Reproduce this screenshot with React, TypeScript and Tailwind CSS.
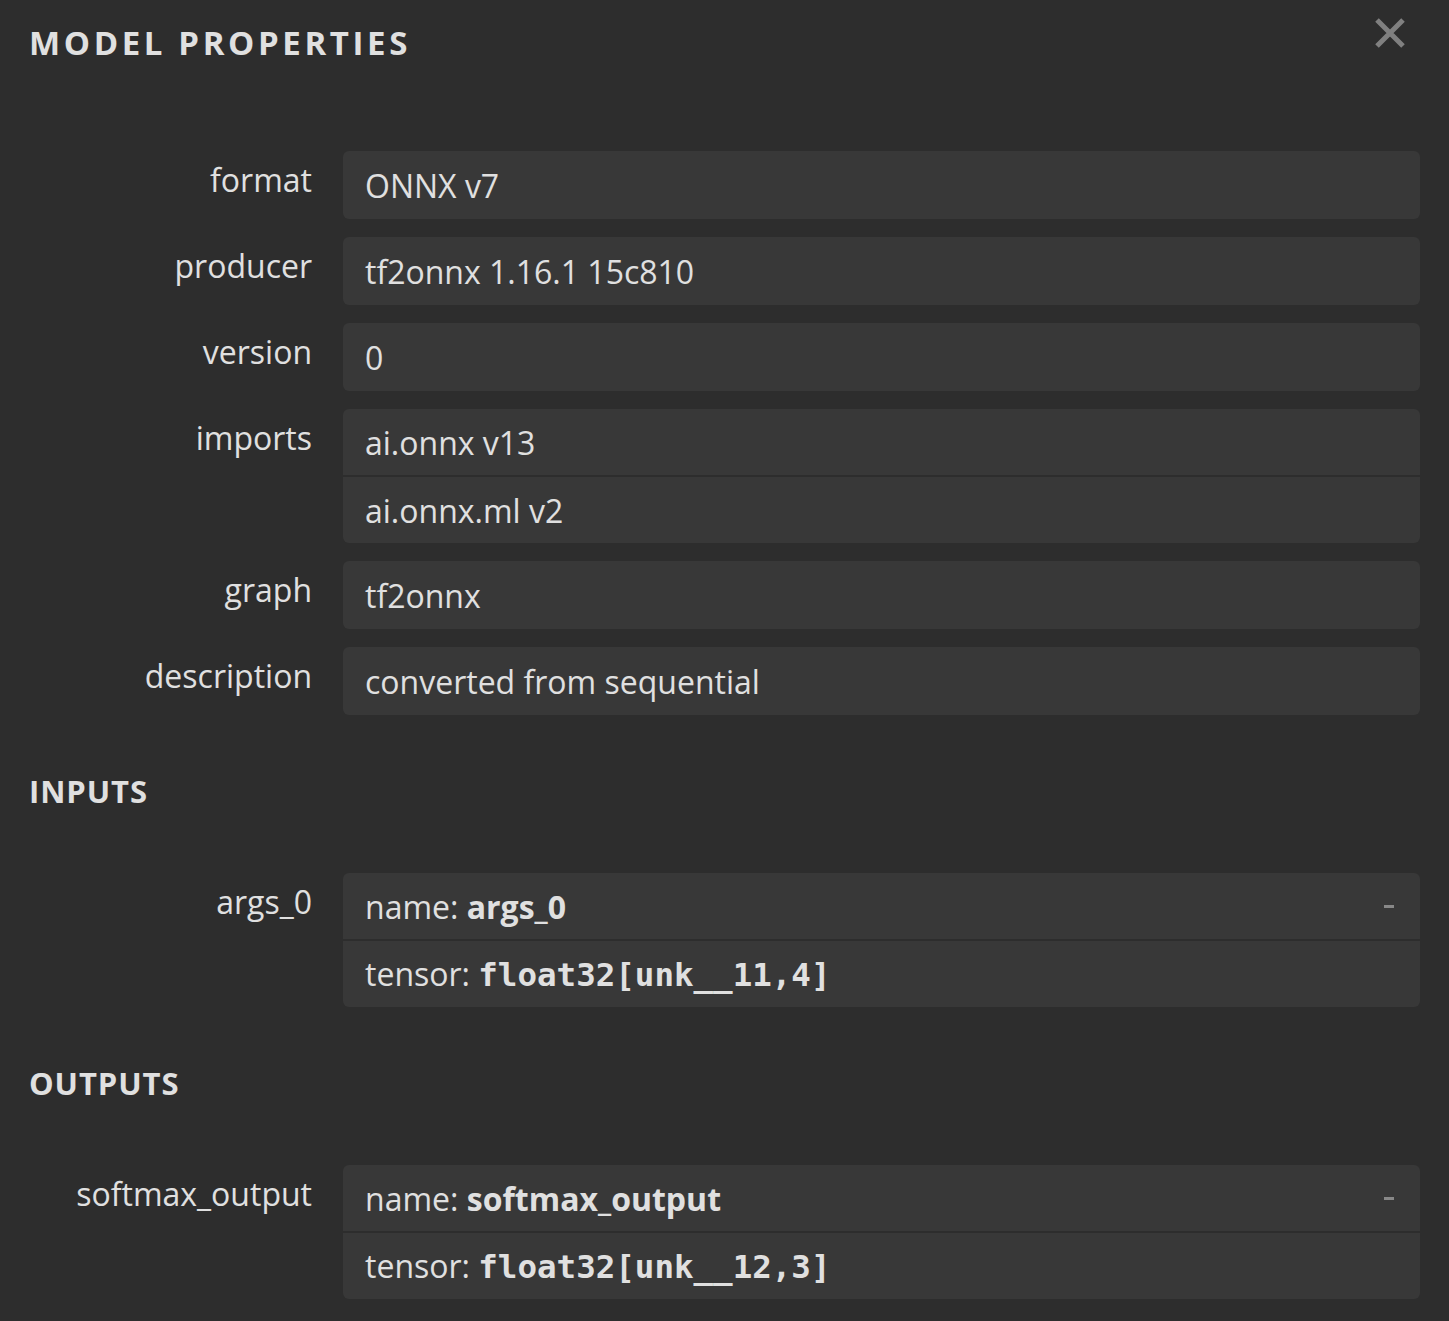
import React from 'react';

type Row = { label: string; values: React.ReactNode[]; expander?: boolean };

const sans = { fontFamily: '"Open Sans", "Noto Sans", sans-serif' };

const metadata: Row[] = [
  { label: 'format', values: ['ONNX v7'] },
  { label: 'producer', values: ['tf2onnx 1.16.1 15c810'] },
  { label: 'version', values: ['0'] },
  { label: 'imports', values: ['ai.onnx v13', 'ai.onnx.ml v2'] },
  { label: 'graph', values: ['tf2onnx'] },
  { label: 'description', values: ['converted from sequential'] },
];

const Arg = ({ name, type }: { name: string; type: string }) => [
  <span key="n">
    name: <b className="font-bold">{name}</b>
  </span>,
  <span key="t">
    tensor:{' '}
    <code className="font-bold font-['DejaVu_Sans_Mono',monospace] text-[32.5px]">{type}</code>
  </span>,
];

const inputs: Row[] = [{ label: 'args_0', values: Arg({ name: 'args_0', type: 'float32[unk__11,4]' }), expander: true }];
const outputs: Row[] = [
  { label: 'softmax_output', values: Arg({ name: 'softmax_output', type: 'float32[unk__12,3]' }), expander: true },
];

const PropertyList = ({ rows }: { rows: Row[] }) => (
  <div className="grid grid-cols-[283px_1fr] gap-x-[31px] gap-y-[18px]">
    {rows.map((row) => (
      <React.Fragment key={row.label}>
        <div className="text-right text-[32px] leading-[40px] pt-[9px] text-[#e0e0e0]">{row.label}</div>
        <div className="flex flex-col gap-[2px] rounded-[6px] overflow-hidden">
          {row.values.map((v, i) => (
            <div
              key={i}
              className={`relative bg-[#383838] px-[22px] flex items-center text-[32px] text-[#e0e0e0] pt-[2px] ${
                row.values.length > 1 ? 'h-[66px]' : 'h-[68px]'
              }`}
            >
              {v}
              {row.expander && i === 0 && (
                <span className="absolute right-[26px] top-[32px] w-[10px] h-[3px] bg-[#888888]" />
              )}
            </div>
          ))}
        </div>
      </React.Fragment>
    ))}
  </div>
);

const SectionTitle = ({ children }: { children: React.ReactNode }) => (
  <h2 className="text-[31px] font-bold tracking-[0.03em] leading-[40px] text-[#e0e0e0]">{children}</h2>
);

export default function App() {
  return (
    <div className="min-h-screen w-full bg-[#2d2d2d] px-[29px] pt-[23px] pb-[20px]" style={sans}>
      <div className="flex items-start justify-between">
        <h1 className="text-[33px] font-bold tracking-[0.11em] leading-[40px] text-[#e0e0e0]">MODEL PROPERTIES</h1>
        <button className="mr-[14px] mt-[-6px] text-[#808080]" aria-label="close">
          <svg width="32" height="32" viewBox="0 0 32 32">
            <path d="M3 3 L29 29 M29 3 L3 29" stroke="currentColor" strokeWidth="5" />
          </svg>
        </button>
      </div>

      <div className="mt-[88px]">
        <PropertyList rows={metadata} />
      </div>

      <div className="mt-[56px]">
        <SectionTitle>INPUTS</SectionTitle>
      </div>
      <div className="mt-[62px]">
        <PropertyList rows={inputs} />
      </div>

      <div className="mt-[56px]">
        <SectionTitle>OUTPUTS</SectionTitle>
      </div>
      <div className="mt-[62px]">
        <PropertyList rows={outputs} />
      </div>
    </div>
  );
}
